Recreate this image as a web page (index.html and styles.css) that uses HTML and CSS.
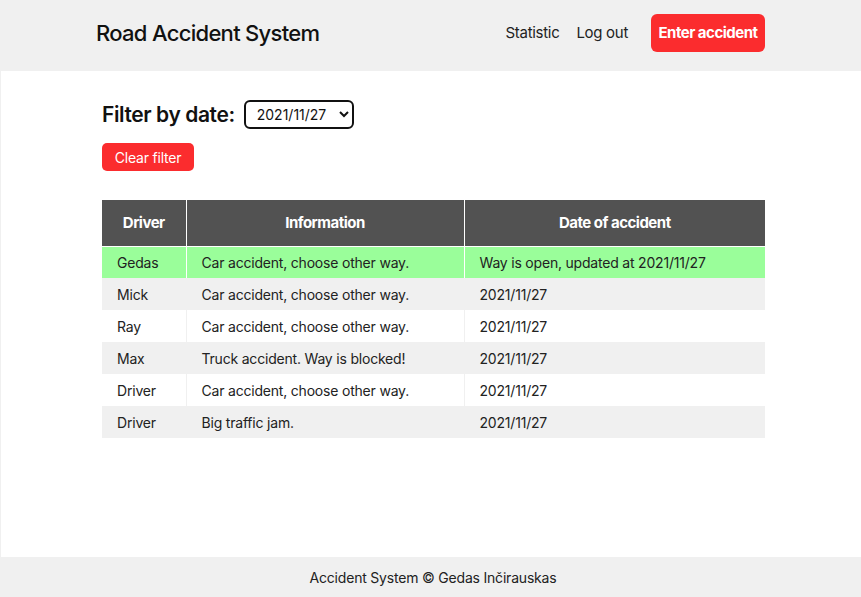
FILE: index.html
```html
<!DOCTYPE html>
<html>
<head>
<meta charset="utf-8">
<link rel="stylesheet" href="styles.css">
</head>
<body>
<div class="page">
  <header class="topbar">
    <div class="container bar">
      <h1 class="brand">Road Accident System</h1>
      <nav class="nav">
        <a class="nav-link">Statistic</a>
        <a class="nav-link">Log out</a>
        <a class="btn-enter">Enter accident</a>
      </nav>
    </div>
  </header>
  <main class="main">
    <div class="container content">
      <div class="filter">
        <h2 class="filter-title">Filter by date:</h2>
        <select class="date-select"><option>2021/11/27</option></select>
      </div>
      <button class="btn-clear">Clear filter</button>
      <table class="acc-table">
        <thead>
          <tr><th class="c1">Driver</th><th class="c2">Information</th><th class="c3">Date of accident</th></tr>
        </thead>
        <tbody>
          <tr class="open"><td>Gedas</td><td>Car accident, choose other way.</td><td>Way is open, updated at 2021/11/27</td></tr>
          <tr><td>Mick</td><td>Car accident, choose other way.</td><td>2021/11/27</td></tr>
          <tr><td>Ray</td><td>Car accident, choose other way.</td><td>2021/11/27</td></tr>
          <tr><td>Max</td><td>Truck accident. Way is blocked!</td><td>2021/11/27</td></tr>
          <tr><td>Driver</td><td>Car accident, choose other way.</td><td>2021/11/27</td></tr>
          <tr><td>Driver</td><td>Big traffic jam.</td><td>2021/11/27</td></tr>
        </tbody>
      </table>
    </div>
  </main>
  <footer class="footer">Accident System © Gedas Inčirauskas</footer>
</div>
</body>
</html>
```
FILE: styles.css
```css
* { box-sizing: border-box; }
html, body { margin: 0; padding: 0; }
body {
  font-family: Inter, "Noto Sans", sans-serif;
  color: #111;
  background: #f0f0f0;
}
.page {
  display: flex;
  flex-direction: column;
  height: 597px;
}
.topbar {
  background: #f0f0f0;
  height: 71px;
  flex: none;
}
.container {
  width: 669px;
  margin-left: 96px;
}
.bar {
  display: flex;
  align-items: center;
  justify-content: space-between;
  height: 65px;
}
.brand {
  margin: 0;
  font-size: 22px;
  font-weight: 500;
  letter-spacing: -0.7px;
  color: #111;
}
.nav {
  display: flex;
  align-items: center;
}
.nav-link {
  font-size: 15px;
  color: #222;
  margin-right: 17px;
  letter-spacing: -0.3px;
}
.nav-link + .nav-link { margin-right: 23px; }
.btn-enter {
  background: #fb2c2e;
  color: #fff;
  font-weight: 700;
  font-size: 15px;
  letter-spacing: -0.5px;
  border-radius: 6px;
  height: 38px;
  width: 114px;
  display: flex;
  align-items: center;
  justify-content: center;
}
.main {
  flex: 1;
  background: #fff;
  margin-left: 1px;
}
.content {
  padding-left: 5px;
  width: 669px;
  padding-top: 29px;
}
.filter {
  display: flex;
  align-items: center;
  gap: 9px;
}
.filter-title {
  margin: 0;
  font-size: 21px;
  font-weight: 600;
  letter-spacing: -0.4px;
}
.date-select {
  width: 110px;
  height: 29px;
  border: 2px solid #111;
  border-radius: 6px;
  background: #fff;
  font-family: Inter, sans-serif;
  font-size: 14px;
  padding-left: 7px;
  color: #111;
}
.btn-clear {
  display: block;
  margin-top: 14px;
  background: #fb2c2e;
  color: #fff;
  border: none;
  border-radius: 5px;
  font-family: Inter, sans-serif;
  font-size: 14px;
  height: 28px;
  width: 92px;
  padding: 0;
  letter-spacing: -0.2px;
}
.acc-table {
  margin-top: 29px;
  width: 663px;
  border-collapse: collapse;
  font-size: 14px;
}
.acc-table th {
  background: #525252;
  color: #fff;
  font-weight: 700;
  height: 46px;
  font-size: 15px;
  letter-spacing: -0.5px;
  border: 1px solid #fff;
  border-top: none;
}
.acc-table th:first-child, .acc-table td:first-child { border-left: none; }
.acc-table th:last-child, .acc-table td:last-child { border-right: none; }
.c1 { width: 84px; }
.c2 { width: 278px; }
.acc-table td {
  height: 32px;
  padding: 0 15px;
  color: #222;
  letter-spacing: -0.2px;
  border: 1px solid #f0f0f0;
  border-top: none;
  border-bottom: none;
}
.acc-table tbody tr:nth-child(even) td { background: #f0f0f0; border-color: #f0f0f0; }
.acc-table tbody tr:nth-child(odd) td { background: #fff; border-color: #f0f0f0; }
.acc-table tbody tr.open td { background: #9afe9a; border-color: #fff; border-top: 1px solid #fff; }
.footer {
  height: 40px;
  flex: none;
  background: #f0f0f0;
  display: flex;
  align-items: center;
  justify-content: center;
  font-size: 14px;
  letter-spacing: -0.2px;
  color: #222;
  padding-left: 5px;
}
```
